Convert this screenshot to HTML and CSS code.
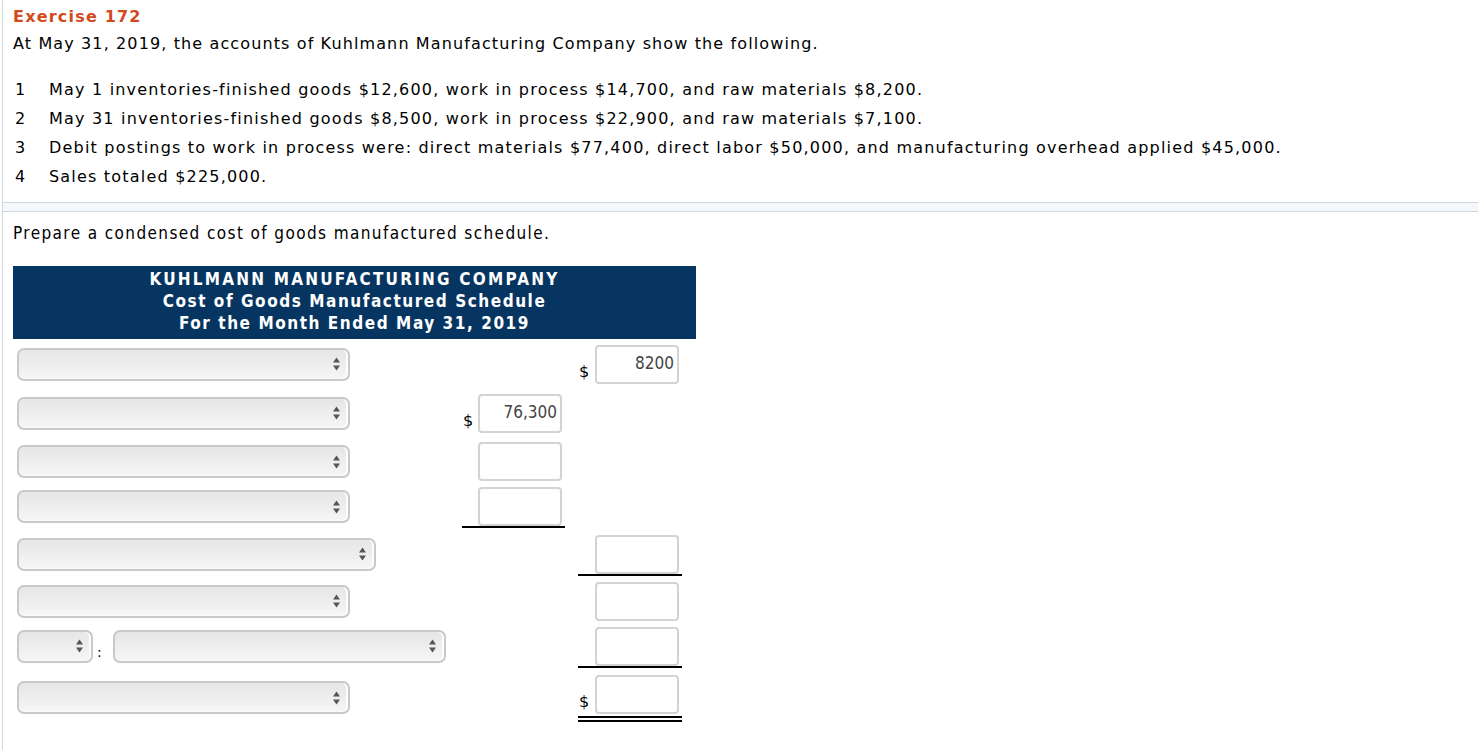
FILE: index.html
```html
<!DOCTYPE html>
<html>
<head>
<meta charset="utf-8">
<link rel="stylesheet" href="styles.css">
</head>
<body>
<div class="page">
  <div class="panel panel-top">
    <h1 class="title">Exercise 172</h1>
    <p class="intro">At May 31, 2019, the accounts of Kuhlmann Manufacturing Company show the following.</p>
    <ol class="facts">
      <li><span class="num">1</span><span>May 1 inventories-finished goods $12,600, work in process $14,700, and raw materials $8,200.</span></li>
      <li><span class="num">2</span><span>May 31 inventories-finished goods $8,500, work in process $22,900, and raw materials $7,100.</span></li>
      <li><span class="num">3</span><span>Debit postings to work in process were: direct materials $77,400, direct labor $50,000, and manufacturing overhead applied $45,000.</span></li>
      <li><span class="num">4</span><span>Sales totaled $225,000.</span></li>
    </ol>
  </div>
  <div class="gap-strip"></div>
  <div class="panel panel-bottom">
    <p class="prompt">Prepare a condensed cost of goods manufactured schedule.</p>
    <div class="sheet">
      <div class="sheet-head">
        <div class="caps">KUHLMANN MANUFACTURING COMPANY</div>
        <div>Cost of Goods Manufactured Schedule</div>
        <div>For the Month Ended May 31, 2019</div>
      </div>
      <div class="grid">
        <!-- row 1 -->
        <div class="c1"><div class="sel w333"><svg class="arr" width="9" height="14" viewBox="0 0 9 14"><path d="M4.5 0.5 L8 5.5 L1 5.5 Z M4.5 13.5 L8 8.5 L1 8.5 Z" fill="#555"/></svg></div></div>
        <div class="c2"></div>
        <div class="c3"><div class="cell"><span class="dollar">$</span><div class="inp">8200</div></div></div>
        <!-- row 2 -->
        <div class="c1"><div class="sel w333"><svg class="arr" width="9" height="14" viewBox="0 0 9 14"><path d="M4.5 0.5 L8 5.5 L1 5.5 Z M4.5 13.5 L8 8.5 L1 8.5 Z" fill="#555"/></svg></div></div>
        <div class="c2"><div class="cell"><span class="dollar">$</span><div class="inp">76,300</div></div></div>
        <div class="c3"></div>
        <!-- row 3 -->
        <div class="c1"><div class="sel w333"><svg class="arr" width="9" height="14" viewBox="0 0 9 14"><path d="M4.5 0.5 L8 5.5 L1 5.5 Z M4.5 13.5 L8 8.5 L1 8.5 Z" fill="#555"/></svg></div></div>
        <div class="c2"><div class="cell"><span class="dollar"></span><div class="inp"></div></div></div>
        <div class="c3"></div>
        <!-- row 4 -->
        <div class="c1"><div class="sel w333"><svg class="arr" width="9" height="14" viewBox="0 0 9 14"><path d="M4.5 0.5 L8 5.5 L1 5.5 Z M4.5 13.5 L8 8.5 L1 8.5 Z" fill="#555"/></svg></div></div>
        <div class="c2"><div class="cell under"><span class="dollar"></span><div class="inp"></div></div></div>
        <div class="c3"></div>
        <!-- row 5 -->
        <div class="c1"><div class="sel w359"><svg class="arr" width="9" height="14" viewBox="0 0 9 14"><path d="M4.5 0.5 L8 5.5 L1 5.5 Z M4.5 13.5 L8 8.5 L1 8.5 Z" fill="#555"/></svg></div></div>
        <div class="c2"></div>
        <div class="c3"><div class="cell under"><span class="dollar"></span><div class="inp"></div></div></div>
        <!-- row 6 -->
        <div class="c1"><div class="sel w333"><svg class="arr" width="9" height="14" viewBox="0 0 9 14"><path d="M4.5 0.5 L8 5.5 L1 5.5 Z M4.5 13.5 L8 8.5 L1 8.5 Z" fill="#555"/></svg></div></div>
        <div class="c2"></div>
        <div class="c3"><div class="cell"><span class="dollar"></span><div class="inp"></div></div></div>
        <!-- row 7 -->
        <div class="c1 pair"><div class="sel w76"><svg class="arr" width="9" height="14" viewBox="0 0 9 14"><path d="M4.5 0.5 L8 5.5 L1 5.5 Z M4.5 13.5 L8 8.5 L1 8.5 Z" fill="#555"/></svg></div><span class="colon">:</span><div class="sel w333"><svg class="arr" width="9" height="14" viewBox="0 0 9 14"><path d="M4.5 0.5 L8 5.5 L1 5.5 Z M4.5 13.5 L8 8.5 L1 8.5 Z" fill="#555"/></svg></div></div>
        <div class="c2"></div>
        <div class="c3"><div class="cell under"><span class="dollar"></span><div class="inp"></div></div></div>
        <!-- row 8 -->
        <div class="c1 last"><div class="sel w333"><svg class="arr" width="9" height="14" viewBox="0 0 9 14"><path d="M4.5 0.5 L8 5.5 L1 5.5 Z M4.5 13.5 L8 8.5 L1 8.5 Z" fill="#555"/></svg></div></div>
        <div class="c2"></div>
        <div class="c3"><div class="cell double"><span class="dollar">$</span><div class="inp"></div></div></div>
      </div>
    </div>
  </div>
</div>
</body>
</html>
```

FILE: styles.css
```css
html, body {
  margin: 0;
  padding: 0;
  background: #fff;
}
body {
  font-family: "DejaVu Sans", Verdana, sans-serif;
  color: #000;
}
.page {
  margin-left: 2px;
  border-left: 1px solid #cdd6e3;
  min-height: 750px;
}
.panel-top {
  padding: 6px 0 11px 10px;
  border-bottom: 1px solid #cdd6e3;
}
.title {
  margin: 0;
  font-size: 16px;
  line-height: 22px;
  letter-spacing: 1.2px;
  font-weight: bold;
  color: #d2491c;
}
.intro {
  margin: 5px 0 0 0;
  font-size: 16px;
  line-height: 22px;
  letter-spacing: 1.12px;
}
.facts {
  list-style: none;
  margin: 20px 0 0 0;
  padding: 0;
  font-size: 16px;
  line-height: 29px;
  letter-spacing: 1.2px;
}
.facts li {
  display: flex;
}
.num {
  width: 36px;
  padding-left: 2px;
  box-sizing: border-box;
  letter-spacing: 0;
}
.gap-strip {
  height: 8px;
  background: #f5f8fb;
}
.panel-bottom {
  border-top: 1px solid #cdd6e3;
  padding: 11px 0 20px 10px;
}
.prompt {
  margin: 0;
  font-family: "DejaVu Sans Condensed", "DejaVu Sans", sans-serif;
  font-size: 17px;
  line-height: 20px;
  letter-spacing: 1.4px;
}
.sheet {
  margin-top: 23px;
  width: 683px;
}
.sheet-head {
  background: #063561;
  color: #fff;
  font-family: "DejaVu Sans Condensed", "DejaVu Sans", sans-serif;
  font-weight: bold;
  font-size: 17px;
  line-height: 22px;
  letter-spacing: 1.55px;
  text-align: center;
  padding: 2px 0 5px 0;
}
.sheet-head .caps {
  letter-spacing: 2.2px;
}
.grid {
  display: grid;
  grid-template-columns: 432px 103px 104px;
  grid-template-rows: 48px 50px 47px 43px 52px 42px 48px 48px;
  column-gap: 13px;
  padding-left: 4px;
  margin-top: 1px;
}
.c1, .c2, .c3 {
  display: flex;
  align-items: center;
}
.c1.last {
  padding-top: 7px;
}
.sel {
  height: 33px;
  box-sizing: border-box;
  border: 2px solid #c9c9c9;
  border-radius: 7px;
  background: linear-gradient(to bottom, #e6e6e6 0%, #ededed 45%, #f6f6f6 100%);
  box-shadow: inset -2px 0 0 #fdfdfd, inset 0 -1px 0 #fafafa;
  display: flex;
  align-items: center;
  justify-content: flex-end;
  padding-right: 7px;
}
.w333 { width: 333px; }
.w359 { width: 359px; }
.w76 { width: 76px; }
.arr { display: block; }
.colon {
  margin: 12px 11px 0 4px;
  font-size: 14px;
  line-height: 14px;
}
.cell {
  width: 100%;
  display: flex;
  justify-content: flex-end;
  align-items: flex-end;
  padding-right: 3px;
  box-sizing: border-box;
}
.cell.under {
  border-bottom: 2px solid #000;
  margin-top: 2px;
}
.cell.double {
  border-bottom: 6px double #000;
  padding-bottom: 2px;
  margin-top: 8px;
}
.dollar {
  flex: 1;
  padding-left: 1px;
  padding-bottom: 3px;
  font-family: "DejaVu Sans", sans-serif;
  font-size: 16px;
  line-height: 18px;
}
.inp {
  width: 84px;
  height: 39px;
  box-sizing: border-box;
  border: 2px solid #d3d3d3;
  border-radius: 4px;
  background: #fff;
  text-align: right;
  padding: 6px 3px 0 0;
  font-family: "DejaVu Sans Condensed", "DejaVu Sans", sans-serif;
  font-size: 17px;
  line-height: 20px;
  color: #444;
}
```
